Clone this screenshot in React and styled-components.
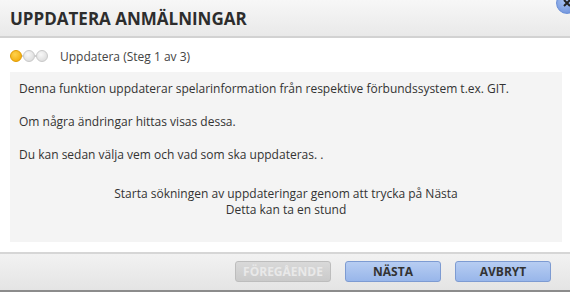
import React from "react";
import styled, { createGlobalStyle } from "styled-components";

const Global = createGlobalStyle`
  html, body { margin: 0; padding: 0; background: #fff; }
  body { font-family: "Open Sans", "Liberation Sans", sans-serif; color: #333; }
`;

const Dialog = styled.div`
  width: 570px;
  height: 292px;
  display: flex;
  flex-direction: column;
  background: #fff;
  position: relative;
  overflow: hidden;
  box-sizing: border-box;
`;

const Header = styled.div`
  height: 38px;
  box-sizing: border-box;
  display: flex;
  align-items: center;
  padding: 0 10px;
  background: linear-gradient(#f7f7f7, #e9e9e9);
  border-bottom: 2px solid #d2d2d2;
`;

const Title = styled.h1`
  margin: 0;
  font-size: 17px;
  font-weight: 700;
  color: #2d2d2d;
`;

const CloseBtn = styled.div`
  position: absolute;
  top: -8px;
  right: -8px;
  width: 20px;
  height: 20px;
  border-radius: 50%;
  background: radial-gradient(circle at 40% 40%, #a9c3f2, #5f86d6);
  border: 1px solid #6a8fd8;
  display: flex;
  align-items: center;
  justify-content: center;
`;

const Body = styled.div`
  flex: 1;
  display: flex;
  flex-direction: column;
  padding: 0 8px 10px 10px;
`;

const StepRow = styled.div`
  display: flex;
  align-items: center;
  height: 34px;
  padding-top: 2px;
  box-sizing: border-box;
  gap: 12px;
  font-size: 12px;
  color: #444;
`;

const Dots = styled.div`
  display: flex;
  align-items: center;
`;

const Dot = styled.span`
  width: 12px;
  height: 12px;
  border-radius: 50%;
  box-sizing: border-box;
  background: ${(p) =>
    p.$active
      ? "radial-gradient(circle at 40% 35%, #ffd24d, #f0a500)"
      : "radial-gradient(circle at 40% 35%, #f8f8f8, #d6d6d6)"};
  border: 1px solid ${(p) => (p.$active ? "#e09a00" : "#c8c8c8")};
`;

const Link = styled.span`
  width: 1px;
  height: 2px;
  background: #cfcfcf;
`;

const Panel = styled.div`
  flex: 1;
  background: #f4f4f4;
  padding: 9px 9px;
  font-size: 12px;
  color: #333;
  display: flex;
  flex-direction: column;
`;

const Para = styled.p`
  margin: 0 0 17px;
  line-height: 16px;
`;

const Center = styled.div`
  margin-top: 6px;
  text-align: center;
  line-height: 16px;
`;

const Footer = styled.div`
  height: 40px;
  box-sizing: border-box;
  display: flex;
  justify-content: flex-end;
  align-items: center;
  gap: 14px;
  padding: 0 19px 1px 0;
  background: linear-gradient(#f2f2f2, #e4e4e4);
  border-top: 2px solid #d6d6d6;
  border-bottom: 2px solid #8c8c8c;
`;

const Button = styled.button`
  width: 96px;
  height: 21px;
  border-radius: 3px;
  font-family: "Open Sans", "Liberation Sans", sans-serif;
  font-size: 12px;
  font-weight: 700;
  padding: 0;
  cursor: pointer;
  color: ${(p) => (p.disabled ? "#e9e9e9" : "#333")};
  border: 1px solid ${(p) => (p.disabled ? "#bdbdbd" : "#7d9bd2")};
  background: ${(p) =>
    p.disabled
      ? "linear-gradient(#d9d9d9, #cacaca)"
      : "linear-gradient(#b7cdf2, #98b6ea)"};
`;

export default function App() {
  return (
    <>
      <Global />
      <Dialog>
        <Header>
          <Title>UPPDATERA ANMÄLNINGAR</Title>
        </Header>
        <CloseBtn>
          <svg width="10" height="10" viewBox="0 0 10 10">
            <path d="M2 2 L8 8 M8 2 L2 8" stroke="#222" strokeWidth="2" />
          </svg>
        </CloseBtn>
        <Body>
          <StepRow>
            <Dots>
              <Dot $active />
              <Link />
              <Dot />
              <Link />
              <Dot />
            </Dots>
            <span>Uppdatera (Steg 1 av 3)</span>
          </StepRow>
          <Panel>
            <Para>Denna funktion uppdaterar spelarinformation från respektive förbundssystem t.ex. GIT.</Para>
            <Para>Om några ändringar hittas visas dessa.</Para>
            <Para>Du kan sedan välja vem och vad som ska uppdateras. .</Para>
            <Center>
              Starta sökningen av uppdateringar genom att trycka på Nästa
              <br />
              Detta kan ta en stund
            </Center>
          </Panel>
        </Body>
        <Footer>
          <Button disabled>FÖREGÅENDE</Button>
          <Button>NÄSTA</Button>
          <Button>AVBRYT</Button>
        </Footer>
      </Dialog>
    </>
  );
}
